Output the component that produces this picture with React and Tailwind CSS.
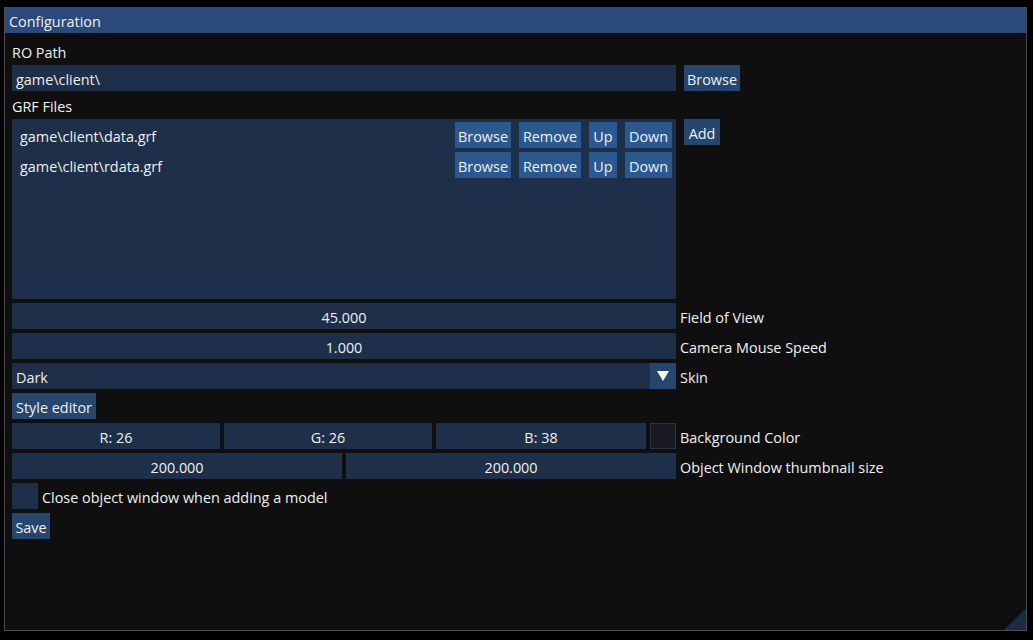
import React from 'react';

const FONT = { fontFamily: '"Open Sans", "Noto Sans", sans-serif' };

function Frame({ className = '', children, center = false }) {
  return (
    <div className={`h-[26px] bg-[#1d2f49] flex items-center px-[4px] pt-[4px] ${center ? 'justify-center' : ''} ${className}`}>
      {children}
    </div>
  );
}

function Btn({ children, className = '', w }) {
  return (
    <div className={`h-[26px] flex items-center justify-center shrink-0 pt-[4px] ${w} ${className || 'bg-[#26487a]'}`}>
      {children}
    </div>
  );
}

function Label({ children }) {
  return <div className="h-[20px] flex items-center pt-[4px]">{children}</div>;
}

function Side({ children }) {
  return <div className="h-[26px] flex items-center pt-[4px] whitespace-nowrap">{children}</div>;
}

function GrfRow({ path }) {
  return (
    <div className="flex gap-[8px]">
      <div className="h-[26px] w-[431px] bg-[#1d2f49] flex items-center px-[4px] pt-[4px]">{path}</div>
      <Btn w="w-[56px]" className="bg-[#2c5890]">Browse</Btn>
      <Btn w="w-[62px]" className="bg-[#2c5890]">Remove</Btn>
      <Btn w="w-[28px]" className="bg-[#2c5890]">Up</Btn>
      <Btn w="w-[47px]" className="bg-[#2c5890]">Down</Btn>
    </div>
  );
}

export default function App() {
  return (
    <div className="w-[1033px] h-[640px] bg-black pt-[7px] pl-[4px]" style={FONT}>
      <div className="w-[1023px] h-[624px] bg-[#0f0f0f] border border-t-0 border-[#4a4a55] flex flex-col text-[14.4px] text-[#f0f0f0] relative overflow-hidden">
        <div className="h-[26px] bg-[#294a7a] flex items-center pl-[5px] pt-[4px] -mx-px">Configuration</div>

        <div className="flex flex-col gap-[4px] pt-[8px] pl-[7px]">
          <Label>RO Path</Label>
          <div className="flex gap-[8px]">
            <Frame className="w-[664px]">game\client\</Frame>
            <Btn w="w-[56px]" className="bg-[#25466f]">Browse</Btn>
          </div>
          <Label>GRF Files</Label>
          <div className="flex gap-[8px]">
            <div className="w-[664px] h-[180px] bg-[#1d2f49] p-[4px] pt-[3px] flex flex-col gap-[4px]">
              <GrfRow path="game\client\data.grf" />
              <GrfRow path="game\client\rdata.grf" />
            </div>
            <Btn w="w-[36px]" className="bg-[#25466f]">Add</Btn>
          </div>

          <div className="flex gap-[4px]">
            <Frame className="w-[664px]" center>45.000</Frame>
            <Side>Field of View</Side>
          </div>
          <div className="flex gap-[4px]">
            <Frame className="w-[664px]" center>1.000</Frame>
            <Side>Camera Mouse Speed</Side>
          </div>
          <div className="flex gap-[4px]">
            <div className="w-[664px] h-[26px] flex">
              <div className="flex-1 bg-[#1d2f49] flex items-center px-[4px] pt-[4px]">Dark</div>
              <div className="w-[26px] bg-[#25466f] flex items-center justify-center">
                <svg width="14" height="12" viewBox="0 0 14 12">
                  <polygon points="1,1 13,1 7,11" fill="#ffffff" />
                </svg>
              </div>
            </div>
            <Side>Skin</Side>
          </div>
          <div>
            <Btn w="w-[84px]" className="bg-[#25466f]">Style editor</Btn>
          </div>
          <div className="flex gap-[4px]">
            <Frame className="w-[208px]" center>R: 26</Frame>
            <Frame className="w-[208px]" center>G: 26</Frame>
            <Frame className="w-[210px]" center>B: 38</Frame>
            <div className="w-[26px] h-[26px] bg-[#1a1a26] border border-[#2a3347]"></div>
            <Side>Background Color</Side>
          </div>
          <div className="flex gap-[4px]">
            <Frame className="w-[330px]" center>200.000</Frame>
            <Frame className="w-[330px]" center>200.000</Frame>
            <Side>Object Window thumbnail size</Side>
          </div>
          <div className="flex gap-[4px]">
            <div className="w-[26px] h-[26px] bg-[#1d2f49]"></div>
            <Side>Close object window when adding a model</Side>
          </div>
          <div>
            <Btn w="w-[38px]" className="bg-[#25466f]">Save</Btn>
          </div>
        </div>

        <svg className="absolute right-0 bottom-0" width="22" height="22" viewBox="0 0 22 22">
          <polygon points="22,0 22,22 0,22" fill="#1a2b43" />
        </svg>
      </div>
    </div>
  );
}
